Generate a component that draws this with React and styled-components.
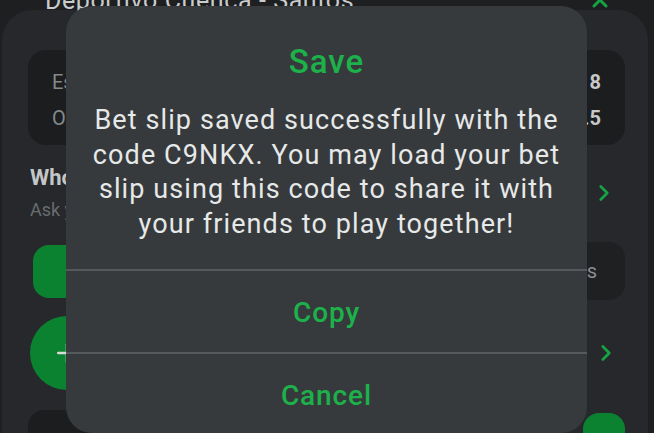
import React from "react";
import styled, { createGlobalStyle } from "styled-components";
import { X, ChevronRight, Plus } from "lucide-react";

const GlobalStyle = createGlobalStyle`
  html, body {
    margin: 0;
    padding: 0;
    background: #1d1f21;
    font-family: Roboto, "Liberation Sans", sans-serif;
    overflow: hidden;
  }
`;

const App = () => {
  return (
    <Screen>
      <GlobalStyle />
      <TopBar>
        <MatchTitle>Deportivo Cuenca - Santos</MatchTitle>
        <X size={24} color="#16a344" strokeWidth={3} />
      </TopBar>

      <Sheet>
        <InfoBox>
          <InfoRow>
            <InfoLabel>Estimated returns</InfoLabel>
            <InfoValue>18</InfoValue>
          </InfoRow>
          <InfoRow>
            <InfoLabel>Odds</InfoLabel>
            <InfoValue>2.5</InfoValue>
          </InfoRow>
        </InfoBox>

        <SectionRow>
          <div>
            <SectionTitle>Who wins?</SectionTitle>
            <SectionSub>Ask your friends to play along</SectionSub>
          </div>
          <ChevronRight size={26} color="#16a344" strokeWidth={2.5} />
        </SectionRow>

        <ActionRow>
          <GreenButton>Place bet</GreenButton>
          <StakeBox>s</StakeBox>
        </ActionRow>

        <AddRow>
          <AddCircle>
            <Plus size={30} color="#d8dcd9" strokeWidth={2} />
          </AddCircle>
          <ChevronRight size={26} color="#16a344" strokeWidth={2.5} />
        </AddRow>

        <BottomRow>
          <BottomBox />
          <BottomGreen />
        </BottomRow>
      </Sheet>

      <Dialog>
        <DialogTitle>Save</DialogTitle>
        <DialogBody>
          Bet slip saved successfully with the code C9NKX. You may load your bet
          slip using this code to share it with your friends to play together!
        </DialogBody>
        <DialogAction>Copy</DialogAction>
        <DialogAction>Cancel</DialogAction>
      </Dialog>
    </Screen>
  );
};

const Screen = styled.div`
  position: relative;
  width: 654px;
  height: 433px;
  overflow: hidden;
  background: #1d1f21;
`;

const TopBar = styled.div`
  display: flex;
  justify-content: space-between;
  align-items: center;
  height: 24px;
  margin-top: -12px;
  padding: 0 42px 0 45px;
`;

const MatchTitle = styled.div`
  font-size: 25px;
  letter-spacing: 0.6px;
  line-height: 1;
  color: #c9cbcc;
`;

const Sheet = styled.div`
  margin: -2px 6px 0 2px;
  height: 440px;
  box-sizing: border-box;
  background: #26282b;
  border-radius: 30px 30px 0 0;
  padding: 40px 23px 0 26px;
`;

const InfoBox = styled.div`
  height: 95px;
  box-sizing: border-box;
  background: #1b1d1f;
  border-radius: 18px;
  padding: 20px 24px 0 24px;
  display: flex;
  flex-direction: column;
  gap: 12px;
`;

const InfoRow = styled.div`
  display: flex;
  justify-content: space-between;
  font-size: 20px;
  line-height: 24px;
`;

const InfoLabel = styled.span`
  color: #85898b;
`;

const InfoValue = styled.span`
  color: #c6c8c9;
  font-weight: 700;
`;

const SectionRow = styled.div`
  display: flex;
  justify-content: space-between;
  align-items: center;
  padding: 19px 8px 0 2px;
`;

const SectionTitle = styled.div`
  font-size: 22px;
  font-weight: 700;
  line-height: 28px;
  color: #c4c6c7;
`;

const SectionSub = styled.div`
  font-size: 18px;
  line-height: 24px;
  margin-top: 6px;
  color: #696c6e;
`;

const ActionRow = styled.div`
  display: flex;
  justify-content: space-between;
  align-items: center;
  margin-top: 20px;
`;

const GreenButton = styled.div`
  margin-left: 5px;
  width: 380px;
  height: 53px;
  border-radius: 16px;
  background: #0b8230;
  color: #e8f2ea;
  font-size: 18px;
  display: flex;
  align-items: center;
  justify-content: center;
`;

const StakeBox = styled.div`
  width: 61px;
  height: 58px;
  box-sizing: border-box;
  padding-right: 28px;
  border-radius: 16px;
  background: #1e2022;
  color: #8a8d8f;
  font-size: 20px;
  display: flex;
  align-items: center;
  justify-content: flex-end;
`;

const AddRow = styled.div`
  display: flex;
  justify-content: space-between;
  align-items: center;
  margin-top: 16px;
  padding-right: 6px;
`;

const AddCircle = styled.div`
  margin-left: 2px;
  width: 74px;
  height: 74px;
  border-radius: 50%;
  background: #0b8230;
  display: flex;
  align-items: center;
  justify-content: center;
`;

const BottomRow = styled.div`
  display: flex;
  justify-content: space-between;
  align-items: flex-start;
  margin-top: 20px;
`;

const BottomBox = styled.div`
  width: 500px;
  height: 60px;
  border-radius: 16px;
  background: #1b1d1f;
`;

const BottomGreen = styled.div`
  margin-top: 3px;
  width: 42px;
  height: 60px;
  border-radius: 16px 16px 0 0;
  background: #0b8230;
`;

const Dialog = styled.div`
  position: absolute;
  left: 66px;
  top: 6px;
  width: 521px;
  height: 427px;
  box-sizing: border-box;
  background: #363a3d;
  border-radius: 26px;
  padding-top: 38px;
  display: flex;
  flex-direction: column;
  overflow: hidden;
`;

const DialogTitle = styled.div`
  flex-shrink: 0;
  text-align: center;
  font-size: 33px;
  font-weight: 500;
  letter-spacing: 1px;
  line-height: 36px;
  color: #1db14a;
`;

const DialogBody = styled.div`
  flex-shrink: 0;
  margin-top: 23px;
  padding: 0 24px 27px;
  text-align: center;
  font-size: 27px;
  letter-spacing: 1.1px;
  line-height: 34.7px;
  color: #e6e9e8;
`;

const DialogAction = styled.div`
  flex-shrink: 0;
  box-sizing: border-box;
  height: 83px;
  padding-top: 3px;
  display: flex;
  align-items: center;
  justify-content: center;
  border-top: 2px solid #55595c;
  font-size: 28px;
  font-weight: 500;
  letter-spacing: 0.9px;
  color: #1db14a;
`;

export default App;
